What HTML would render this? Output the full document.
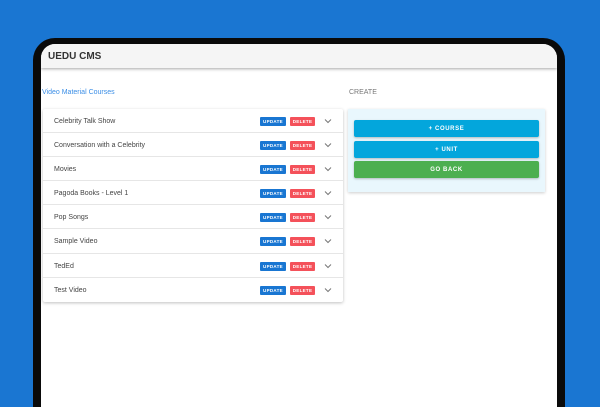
<!DOCTYPE html>
<html><head><style>
*{margin:0;padding:0;box-sizing:border-box}
html,body{width:600px;height:407px;overflow:hidden}
body{background:#1a76d2;position:relative;font-family:"Liberation Sans",sans-serif}
.frame{position:absolute;left:33px;top:38px;width:532px;height:369px;background:#0a0a0a;border-radius:22px 22px 0 0}
.screen{position:absolute;left:41px;top:44px;width:516px;height:363px;background:#fff;border-radius:14px 14px 0 0;overflow:hidden}
.hdr{position:absolute;left:0;top:0;width:516px;height:24px;background:#f5f5f5;box-shadow:0 1px 3px rgba(0,0,0,.35)}
.hdr span{position:absolute;left:7px;top:7px;font-size:10px;font-weight:bold;color:#333}
.lbl{position:absolute;font-size:7px}
.card{position:absolute;left:2px;top:65px;width:300px;height:193px;background:#fff;box-shadow:0 1px 3px rgba(0,0,0,.25);border-radius:2px}
.row{height:24.1px;border-bottom:1px solid #e6e6e6;position:relative}
.row span{position:absolute;left:11px;top:9px;font-size:7px;color:#444}
.b{position:absolute;top:8px;height:9px;border-radius:1px;font-size:4.5px;font-weight:bold;color:#fff;text-align:center;line-height:9px;letter-spacing:.3px}
.u{left:217px;width:26px;background:#1976d2}
.d{left:247px;width:25px;background:#f4515a}
.ch{position:absolute;left:281px;top:9px;width:8px;height:6px}
.panel{position:absolute;left:307px;top:65px;width:197px;height:83px;background:#e9f7fd;box-shadow:0 1px 3px rgba(0,0,0,.2)}
.pb{position:absolute;left:6px;width:185px;height:17px;color:#fff;font-size:6px;font-weight:bold;text-align:center;line-height:18px;letter-spacing:.6px;border-radius:2px;box-shadow:0 1px 2px rgba(0,0,0,.25)}
</style></head><body>
<div class="frame"></div>
<div class="screen">
<div class="hdr"><span>UEDU CMS</span></div>
<div class="lbl" style="left:1px;top:45px;color:#3b8ee6">Video Material Courses</div>
<div class="lbl" style="left:308px;top:45px;color:#777">CREATE</div>
<div class="card">
<div class="row"><span>Celebrity Talk Show</span><div class="b u">UPDATE</div><div class="b d">DELETE</div><svg class="ch" viewBox="0 0 8 6"><path d="M1 1.5L4 4.5L7 1.5" fill="none" stroke="#777" stroke-width="1"/></svg></div>
<div class="row"><span>Conversation with a Celebrity</span><div class="b u">UPDATE</div><div class="b d">DELETE</div><svg class="ch" viewBox="0 0 8 6"><path d="M1 1.5L4 4.5L7 1.5" fill="none" stroke="#777" stroke-width="1"/></svg></div>
<div class="row"><span>Movies</span><div class="b u">UPDATE</div><div class="b d">DELETE</div><svg class="ch" viewBox="0 0 8 6"><path d="M1 1.5L4 4.5L7 1.5" fill="none" stroke="#777" stroke-width="1"/></svg></div>
<div class="row"><span>Pagoda Books - Level 1</span><div class="b u">UPDATE</div><div class="b d">DELETE</div><svg class="ch" viewBox="0 0 8 6"><path d="M1 1.5L4 4.5L7 1.5" fill="none" stroke="#777" stroke-width="1"/></svg></div>
<div class="row"><span>Pop Songs</span><div class="b u">UPDATE</div><div class="b d">DELETE</div><svg class="ch" viewBox="0 0 8 6"><path d="M1 1.5L4 4.5L7 1.5" fill="none" stroke="#777" stroke-width="1"/></svg></div>
<div class="row"><span>Sample Video</span><div class="b u">UPDATE</div><div class="b d">DELETE</div><svg class="ch" viewBox="0 0 8 6"><path d="M1 1.5L4 4.5L7 1.5" fill="none" stroke="#777" stroke-width="1"/></svg></div>
<div class="row"><span>TedEd</span><div class="b u">UPDATE</div><div class="b d">DELETE</div><svg class="ch" viewBox="0 0 8 6"><path d="M1 1.5L4 4.5L7 1.5" fill="none" stroke="#777" stroke-width="1"/></svg></div>
<div class="row" style="border:none"><span>Test Video</span><div class="b u">UPDATE</div><div class="b d">DELETE</div><svg class="ch" viewBox="0 0 8 6"><path d="M1 1.5L4 4.5L7 1.5" fill="none" stroke="#777" stroke-width="1"/></svg></div>
</div>
<div class="panel">
<div class="pb" style="top:11px;background:#03a6dc">+ COURSE</div>
<div class="pb" style="top:32px;background:#03a6dc">+ UNIT</div>
<div class="pb" style="top:52px;background:#4caf50">GO BACK</div>
</div>
</div>
</body></html>
